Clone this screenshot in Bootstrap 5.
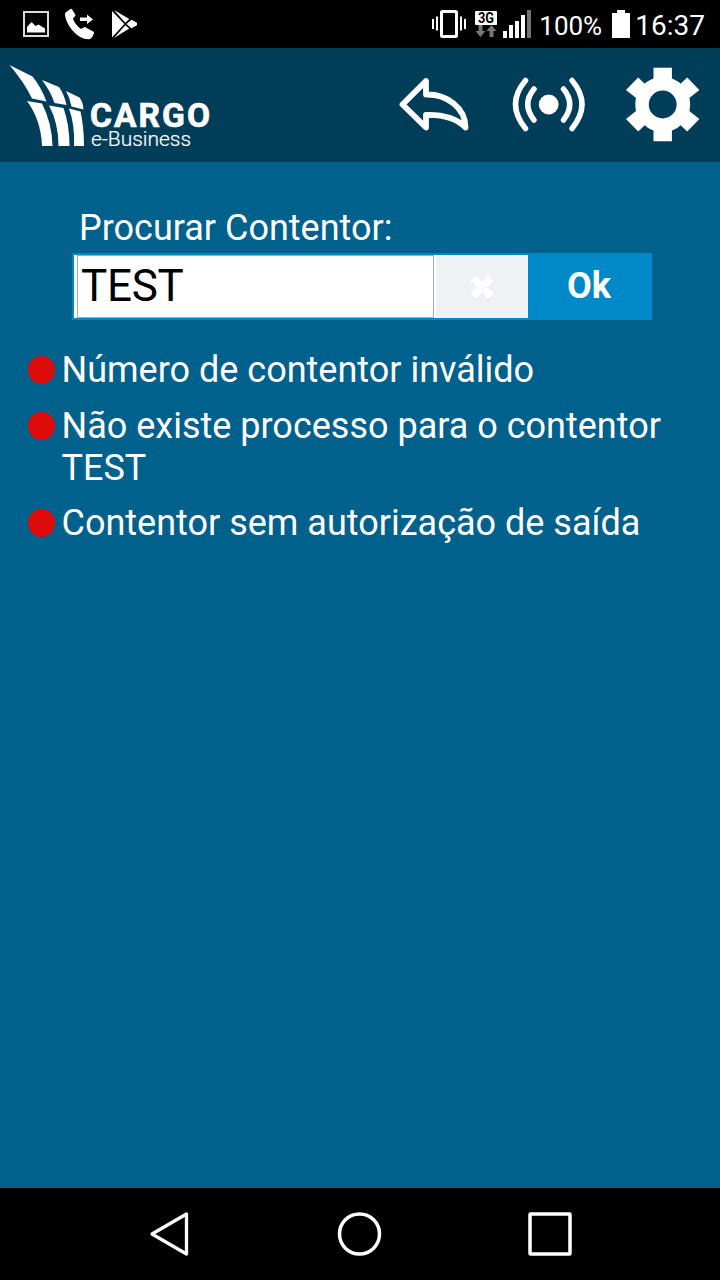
<!DOCTYPE html>
<html lang="pt">
<head>
<meta charset="utf-8">
<meta name="viewport" content="width=device-width, initial-scale=1">
<title>Cargo e-Business</title>
<link href="https://cdn.jsdelivr.net/npm/bootstrap@5.3.0/dist/css/bootstrap.min.css" rel="stylesheet">
<style>
body{font-family:Roboto,"Liberation Sans",sans-serif;background:#00618d;color:#fff;font-size:36px;line-height:42px}
svg{display:block;flex:none}
.screen{height:1280px;overflow:hidden}
.status{height:48px;background:#000;padding:0 15px 0 22px}
.pct{font-size:26px;line-height:30px;margin-left:7px;padding-top:3px;width:64px}
.clock{font-size:28px;line-height:32px;margin-left:5px;padding-top:3px}
.top-head{height:114px;background:#003d59;padding-left:8px;padding-right:20px}
.search-area{padding:45px 68px 0 72px}
.search-area label{padding-left:7px;margin-bottom:4px;display:block}
.search-box{height:67px;border:2px solid #0087c5;background:#fff;padding-left:3px}
.search-box .form-control{flex:0 0 357px;width:357px;border:1px solid #a9a9a9;padding:0 0 2px 3px;font-size:44px;line-height:52px;letter-spacing:-.3px;color:#000;background:#fff}
.btn-clear{width:92px;margin-left:2px!important;background:#f0f1f5;border:0;padding:0;display:flex;align-items:center;justify-content:center}
.btn-ok{flex:1;background:#0089c8;color:#fff;font-weight:700;font-size:36px;line-height:42px;border:0;padding:0 0 2px}
.messages{padding:29px 28px 0;margin:0}
.messages li{margin-bottom:13.500px}
.dot{width:27px;height:28px;border-radius:50%;background:#de0b0b;flex:none;margin:7px 6.500px 0 0}
.nav-keys{height:92px;background:#000;padding:0 147px 0 148px}
</style>
</head>
<body>
<div class="screen d-flex flex-column">
  <div class="status d-flex align-items-center">
    <svg width="118" height="48" viewBox="22 0 118 48">
      <rect x="24" y="12" width="24" height="24" fill="none" stroke="#dcdcd8" stroke-width="2"/>
      <path d="M27 32.500V27l4.500-5 4 4 3-1.500 2.500 1.500 4 2.500v4z" fill="#fff"/>
      <path d="M65.500 12.500l5-3.500q1-.5 1.600.4l3.200 5q.4 1-.3 1.800l-2.200 2.300q2.500 6.500 8.200 10.500l3-1.700q1-.5 1.800.1l7.500 4q1.200.8.600 2l-1.600 3.600q-1 2-3.200 2.200Q80 39.500 72 30q-6.500-8.500-7-15 0-1.500.5-2.500z" fill="#fff"/>
      <path d="M80 17.600h7v-3l6 4.800-6 4.600v-3h-7z" fill="#fff"/>
      <path d="M112 11v26.500L124.300 24zM114 10l11.300 12.800 4-3.800zM114 38l11.300-12.700 4 3.200zM126.500 24l5-4.200 5.500 3v2.500l-5.500 3z" fill="#fff"/>
    </svg>
    <svg class="ms-auto" width="101" height="48" viewBox="431 0 101 48">
      <path d="M433 19v10M437 16.500v14M461 16.500v14M465 19v10" stroke="#fff" stroke-width="2"/>
      <rect x="441.500" y="11.500" width="15" height="25" rx="1" fill="none" stroke="#fff" stroke-width="3"/>
      <rect x="475" y="11" width="22" height="14" rx="1" fill="#fff"/>
      <text x="486" y="23" text-anchor="middle" font-size="14" font-weight="700" fill="#000" textLength="16" lengthAdjust="spacingAndGlyphs">3G</text>
      <path d="M478.500 25h4v6h3l-5 6-5-6h3zM489.500 37h4v-6h3l-5-6-5 6h3z" fill="#777"/>
      <path d="M503 31h4v7h-4zM509 25h4v13h-4zM515 21h4v17h-4zM521 15h4v23h-4z" fill="#fff"/>
      <path d="M527 10h4v28h-4z" fill="#737373"/>
    </svg>
    <span class="pct">100%</span>
    <svg style="margin-left:9px" width="18" height="48" viewBox="612 0 18 48"><path d="M617 10h8v3h5v25h-18V13h5z" fill="#fff"/></svg>
    <span class="clock">16:37</span>
  </div>

  <header class="top-head d-flex">
    <svg width="204" height="114" viewBox="8 48 204 114" fill="#fff">
      <path d="M9.500 65L32.500 76.500Q41 87 46.500 101.500L32 98.500Q24 82 9.500 65z"/>
      <path d="M42 80L59 87Q64 94 66.500 105L54.500 103Q51 92 42 80z"/>
      <path d="M66 91L79.500 97.500Q83 102 83.500 109.500L71.500 106.500Q70 98 66 91z"/>
      <path d="M27 101L42 103.500Q52 123 52.500 146H42Q41 120 27 101z"/>
      <path d="M49 105.500L63.500 108Q69.500 125 69.500 146H58.500Q58.500 123 49 105.500z"/>
      <path d="M69 108.500L80.500 111.500Q84 127 84 146H74Q75 125 69 108.500z"/>
      <text x="90" y="127" font-size="33.500" font-weight="700" textLength="120" stroke="#fff" stroke-width=".7">CARGO</text>
      <text x="91" y="146" font-size="21" font-weight="300" textLength="100" lengthAdjust="spacingAndGlyphs" stroke="#fff" stroke-width=".2">e-Business</text>
    </svg>
    <svg class="ms-auto" width="72" height="114" viewBox="398 48 72 114">
      <path d="M402.500 104.500L426 81V94.500C447 94 465.500 108 465.500 127.500C456 118 443 114.500 426 115V127.500z" fill="none" stroke="#fff" stroke-width="5.800" stroke-linejoin="round"/>
    </svg>
    <svg width="76" height="114" viewBox="510 48 76 114" style="margin-left:40px" fill="none" stroke="#fff" stroke-width="5.500" stroke-linecap="round">
      <circle cx="548.700" cy="104.500" r="9.900" fill="#fff" stroke="none"/>
      <path d="M525.500 80.500Q505.500 104 525.500 128.500M534 89Q521.500 104 534 120M572 80.500Q592 104 572 128.500M563.500 89Q576 104 563.500 120"/>
    </svg>
    <svg width="76" height="114" viewBox="624 48 76 114" style="margin-left:38px">
      <g fill="#fff" transform="translate(662.700 104.500)">
        <path d="M-9.200-36.800H9.200V-20H-9.200z"/>
        <path d="M24.500-27L36.700-14.500 26-6 14-17zM36.700 14.500L24.500 27 14 17 26 6zM-24.500-27L-36.700-14.500-26-6-14-17zM-36.700 14.500L-24.500 27-14 17-26 6zM-9.200 36.800H9.200V20H-9.200z"/>
        <circle r="20.700" fill="none" stroke="#fff" stroke-width="13.500"/>
      </g>
    </svg>
  </header>

  <main class="flex-grow-1">
    <div class="search-area">
      <label for="contentor">Procurar Contentor:</label>
      <div class="search-box d-flex">
        <input id="contentor" class="form-control rounded-0 shadow-none" type="text" value="TEST">
        <button class="btn btn-clear rounded-0" type="button" aria-label="Limpar">
          <svg width="26" height="26" viewBox="0 0 24 24"><path d="M4 4l16 16m0-16l-16 16" stroke="#fff" stroke-width="6.500"/></svg>
        </button>
        <button class="btn btn-ok rounded-0" type="button">Ok</button>
      </div>
    </div>
    <ul class="messages list-unstyled">
      <li class="d-flex"><span class="dot"></span><span>Número de contentor inválido</span></li>
      <li class="d-flex"><span class="dot"></span><span>Não existe processo para o contentor TEST</span></li>
      <li class="d-flex"><span class="dot"></span><span>Contentor sem autorização de saída</span></li>
    </ul>
  </main>

  <nav class="nav-keys d-flex justify-content-between align-items-center">
    <svg width="42" height="92" viewBox="148 1188 42 92"><path d="M152 1234L186.500 1214V1254z" fill="none" stroke="#fff" stroke-width="3.300" stroke-linejoin="round"/></svg>
    <svg width="46" height="92" viewBox="336 1188 46 92"><circle cx="359.500" cy="1234" r="20" fill="none" stroke="#fff" stroke-width="3.500"/></svg>
    <svg width="46" height="92" viewBox="527 1188 46 92"><rect x="530" y="1214" width="40" height="40" rx=".5" fill="none" stroke="#fff" stroke-width="3.500"/></svg>
  </nav>
</div>
<script src="https://cdn.jsdelivr.net/npm/bootstrap@5.3.0/dist/js/bootstrap.bundle.min.js"></script>
</body>
</html>
